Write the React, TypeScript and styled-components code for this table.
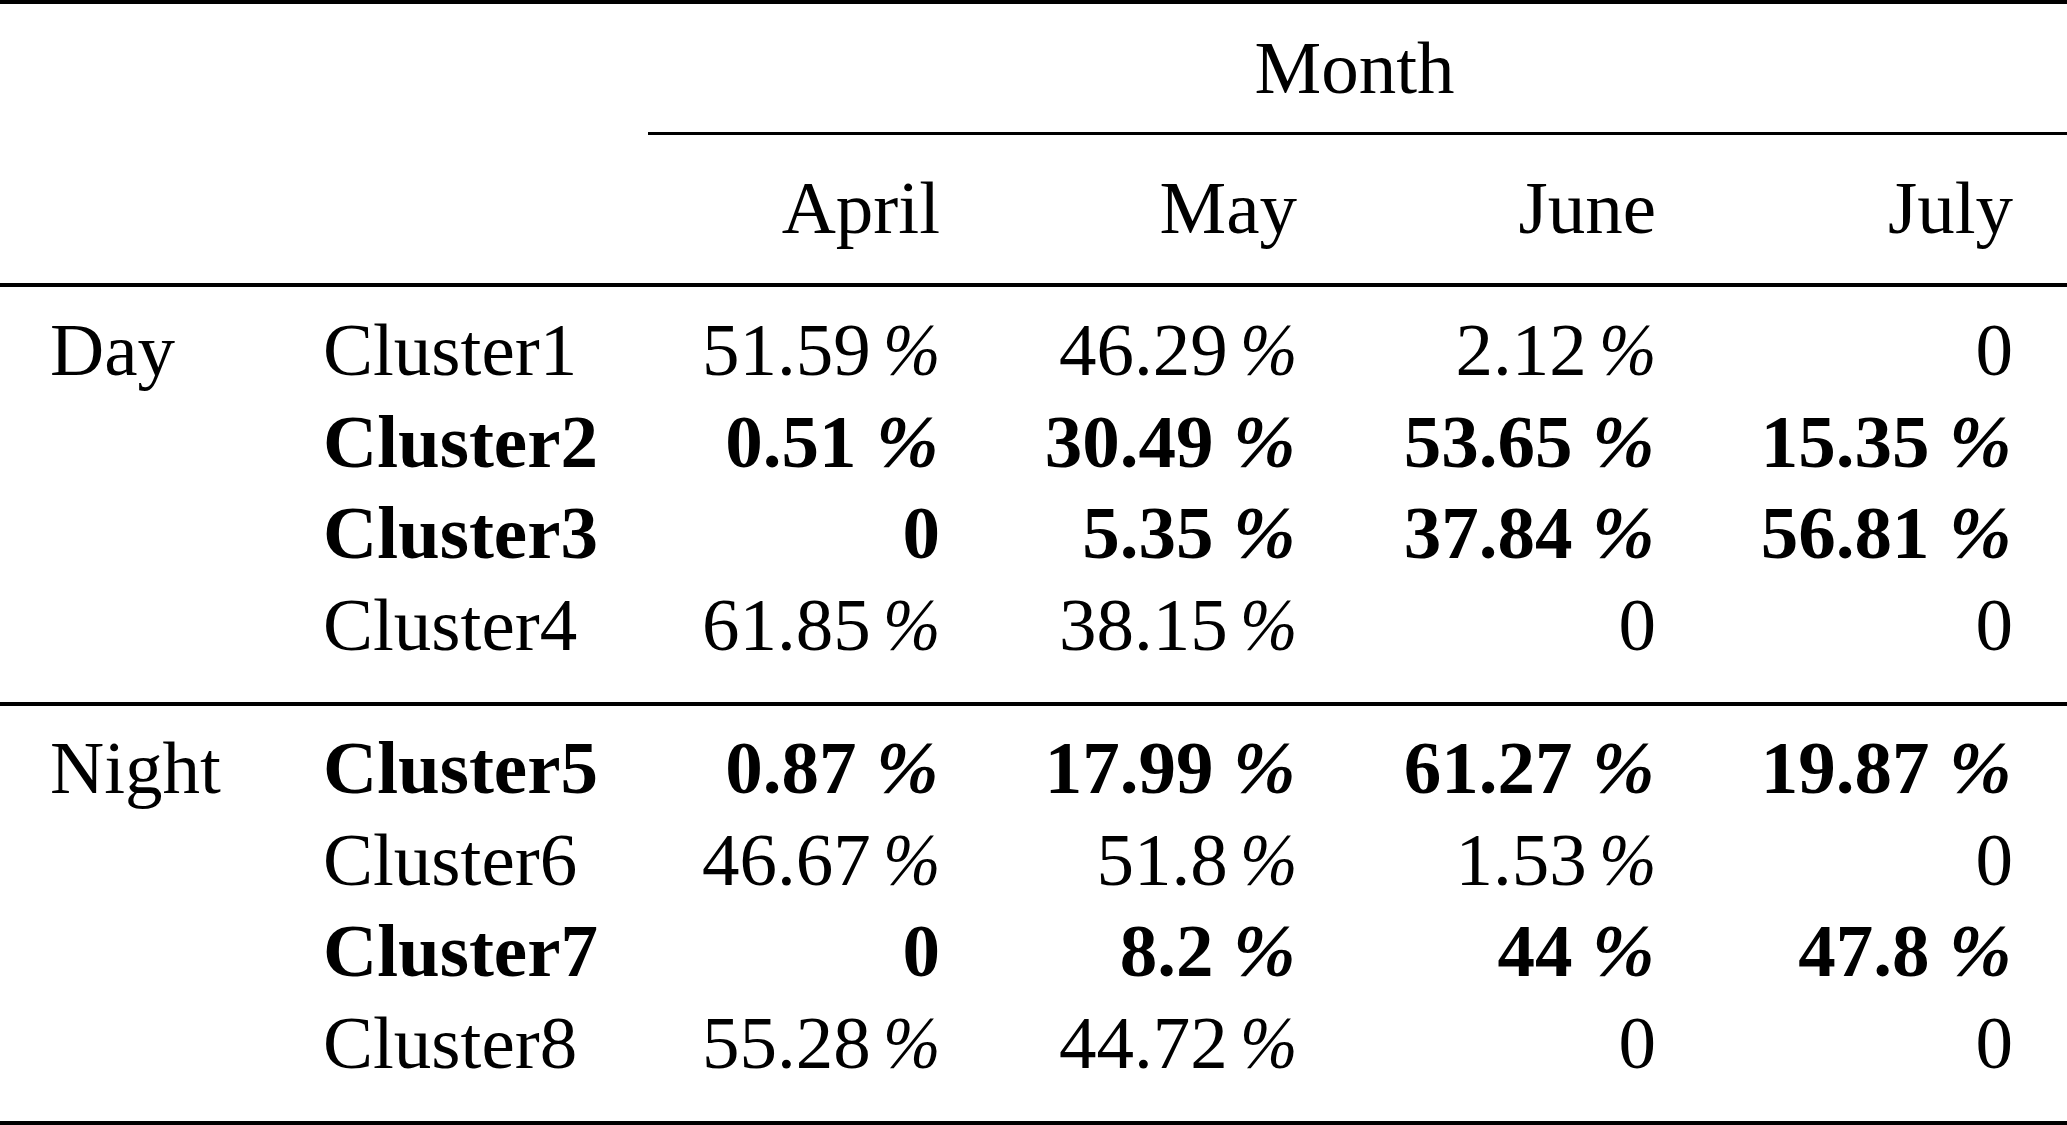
import React from "react";
import styled, { createGlobalStyle } from "styled-components";

const GlobalStyle = createGlobalStyle`
  html, body {
    margin: 0;
    padding: 0;
    background: #fff;
  }
`;

const Table = styled.table`
  width: 2067px;
  table-layout: fixed;
  border-collapse: separate;
  border-spacing: 0;
  font-family: "Liberation Serif", "Times New Roman", serif;
  font-size: 75px;
  line-height: 91.67px;
  color: #000;
`;

interface RowProps {
  $padTop?: number;
  $padBottom?: number;
  $ruleTop?: number;
  $ruleBottom?: number;
}

const Row = styled.tr<RowProps>`
  & > td {
    padding-top: ${({ $padTop }) => $padTop ?? 0}px;
    padding-bottom: ${({ $padBottom }) => $padBottom ?? 0}px;
    border-top: ${({ $ruleTop }) => ($ruleTop ? `${$ruleTop}px solid #000` : "none")};
    border-bottom: ${({ $ruleBottom }) => ($ruleBottom ? `${$ruleBottom}px solid #000` : "none")};
  }
`;

const Cell = styled.td<{ $align?: "left" | "right" | "center"; $bold?: boolean; $rule?: number }>`
  text-align: ${({ $align }) => $align ?? "right"};
  font-weight: ${({ $bold }) => ($bold ? 700 : 400)};
  padding-left: 48px;
  padding-right: 50px;
  white-space: nowrap;
  vertical-align: baseline;

  &:first-child {
    padding-left: 50px;
  }

  &:last-child {
    padding-right: 54px;
  }

  ${Row} > && {
    ${({ $rule }) => ($rule ? `border-bottom: ${$rule}px solid #000;` : "")}
  }
`;

// the percent sign in the source is the slanted Times glyph
const Unit = styled.span<{ $bold?: boolean }>`
  display: inline-block;
  font-style: italic;
  margin-left: ${({ $bold }) => ($bold ? "0.26em" : "0.09em")};
  margin-right: ${({ $bold }) => ($bold ? "0.02em" : "0")};
  transform: scaleX(${({ $bold }) => ($bold ? 1 : 0.92)});
  transform-origin: right center;
`;

type ClusterRow = {
  name: string;
  bold: boolean;
  values: string[];
};

const groups: { label: string; rows: ClusterRow[] }[] = [
  {
    label: "Day",
    rows: [
      { name: "Cluster1", bold: false, values: ["51.59", "46.29", "2.12", "0"] },
      { name: "Cluster2", bold: true, values: ["0.51", "30.49", "53.65", "15.35"] },
      { name: "Cluster3", bold: true, values: ["0", "5.35", "37.84", "56.81"] },
      { name: "Cluster4", bold: false, values: ["61.85", "38.15", "0", "0"] },
    ],
  },
  {
    label: "Night",
    rows: [
      { name: "Cluster5", bold: true, values: ["0.87", "17.99", "61.27", "19.87"] },
      { name: "Cluster6", bold: false, values: ["46.67", "51.8", "1.53", "0"] },
      { name: "Cluster7", bold: true, values: ["0", "8.2", "44", "47.8"] },
      { name: "Cluster8", bold: false, values: ["55.28", "44.72", "0", "0"] },
    ],
  },
];

const months = ["April", "May", "June", "July"];

const Value = ({ value, bold }: { value: string; bold: boolean }) =>
  value === "0" ? (
    <>0</>
  ) : (
    <>
      {value}
      <Unit $bold={bold}>%</Unit>
    </>
  );

export default function App() {
  return (
    <>
      <GlobalStyle />
      <Table>
        <colgroup>
          <col style={{ width: 275 }} />
          <col style={{ width: 373 }} />
          <col style={{ width: 342 }} />
          <col style={{ width: 357 }} />
          <col style={{ width: 359 }} />
          <col style={{ width: 361 }} />
        </colgroup>
        <thead>
          <Row $ruleTop={4} $padTop={18} $padBottom={18}>
            <Cell />
            <Cell />
            <Cell colSpan={4} $align="center" $rule={3}>
              Month
            </Cell>
          </Row>
          <Row $padTop={27.5} $padBottom={29.2} $ruleBottom={4}>
            <Cell />
            <Cell />
            {months.map((m) => (
              <Cell key={m}>{m}</Cell>
            ))}
          </Row>
        </thead>
        {groups.map((group, gi) => (
          <tbody key={group.label}>
            {group.rows.map((row, ri) => {
              const first = ri === 0;
              const last = ri === group.rows.length - 1;
              return (
                <Row
                  key={row.name}
                  $padTop={first ? (gi === 0 ? 16.8 : 16.1) : 0}
                  $padBottom={last ? (gi === 0 ? 31.5 : 32.2) : 0}
                  $ruleBottom={last ? 4 : 0}
                >
                  <Cell $align="left">{first ? group.label : ""}</Cell>
                  <Cell $align="left" $bold={row.bold}>
                    {row.name}
                  </Cell>
                  {row.values.map((v, vi) => (
                    <Cell key={vi} $bold={row.bold}>
                      <Value value={v} bold={row.bold} />
                    </Cell>
                  ))}
                </Row>
              );
            })}
          </tbody>
        ))}
      </Table>
    </>
  );
}
